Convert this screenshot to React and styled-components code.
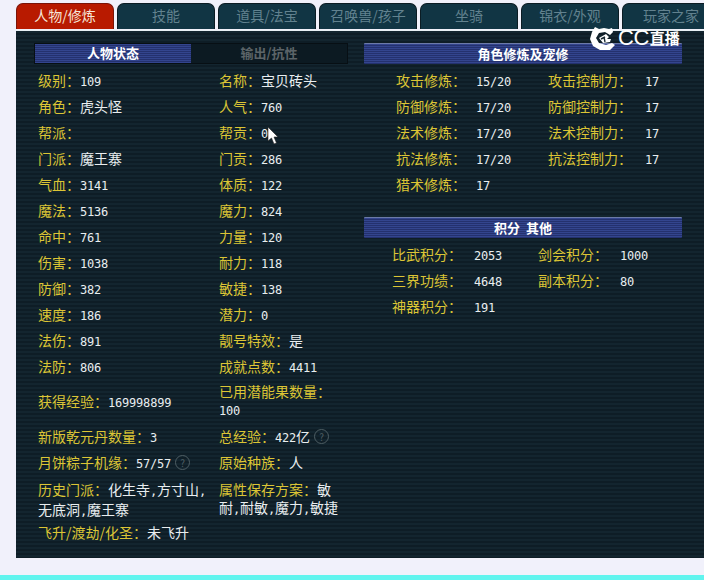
import React from "react"
import styled, { createGlobalStyle } from "styled-components"

const tabs = ["人物/修炼", "技能", "道具/法宝", "召唤兽/孩子", "坐骑", "锦衣/外观", "玩家之家"]

const leftRows = [
  [["级别", "109"], ["名称", "宝贝砖头"]],
  [["角色", "虎头怪"], ["人气", "760"]],
  [["帮派", ""], ["帮贡", "0"]],
  [["门派", "魔王寨"], ["门贡", "286"]],
  [["气血", "3141"], ["体质", "122"]],
  [["魔法", "5136"], ["魔力", "824"]],
  [["命中", "761"], ["力量", "120"]],
  [["伤害", "1038"], ["耐力", "118"]],
  [["防御", "382"], ["敏捷", "138"]],
  [["速度", "186"], ["潜力", "0"]],
  [["法伤", "891"], ["靓号特效", "是"]],
  [["法防", "806"], ["成就点数", "4411"]],
]

const practice = [
  ["攻击修炼", "15/20", "攻击控制力", "17"],
  ["防御修炼", "17/20", "防御控制力", "17"],
  ["法术修炼", "17/20", "法术控制力", "17"],
  ["抗法修炼", "17/20", "抗法控制力", "17"],
  ["猎术修炼", "17"],
]

const points = [
  ["比武积分", "2053", "剑会积分", "1000"],
  ["三界功绩", "4648", "副本积分", "80"],
  ["神器积分", "191"],
]

// digits are a small pixel-like face, chinese runs are a size bigger
function Value({ children }) {
  return String(children)
    .split(/([\u4e00-\u9fff]+)/)
    .filter(Boolean)
    .map((run, i) =>
      /[\u4e00-\u9fff]/.test(run) ? <Hanzi key={i}>{run}</Hanzi> : <Digits key={i}>{run}</Digits>
    )
}

function Stat({ label, value, help }) {
  return (
    <StatText>
      <Label>{label}：</Label>
      <Value>{value}</Value>
      {help && <HelpIcon>?</HelpIcon>}
    </StatText>
  )
}

function Pairs({ rows, widths }) {
  return rows.map((r) => (
    <PairRow key={r[0]} $widths={widths}>
      <Label>{r[0]}：</Label>
      <Digits>{r[1]}</Digits>
      {r[2] && <Label>{r[2]}：</Label>}
      {r[3] && <Digits>{r[3]}</Digits>}
    </PairRow>
  ))
}

export default function App() {
  return (
    <Page>
      <GlobalStyle />
      <TabBar>
        {tabs.map((t, i) => (
          <Tab key={t} $active={i === 0}>{t}</Tab>
        ))}
      </TabBar>
      <Panel>
        <Logo>
          <svg width="26" height="25" viewBox="0 0 26 25">
            <path d="M5 2l4 2 5-1 5 1 3-1 1 4-3 3-5-3-6 1-3 5 3 5 7 2 6-2 3 2-5 5H10l-7-4-3-7 2-7z" fill="#fff" />
            <path d="M9 13l7-4 3 3-2 2 4 0-1 3-7 1z" fill="#fff" />
            <path d="M11 14l4-2M14 12l1 5" stroke="#1a2a33" strokeWidth="1.4" />
          </svg>
          <LogoLatin>CC</LogoLatin>
          <LogoHanzi>直播</LogoHanzi>
        </Logo>
        <Pointer width="13" height="19" viewBox="0 0 13 19">
          <path d="M1 1v14l3.5-3 2.5 6 2.5-1-2.5-6H11z" fill="#fff" stroke="#222" strokeWidth="0.6" />
        </Pointer>
        <LeftColumn>
          <SplitHeader>
            <HeaderActive>人物状态</HeaderActive>
            <HeaderIdle>输出/抗性</HeaderIdle>
          </SplitHeader>
          <StatList>
            {leftRows.map((row, i) => (
              <StatRow key={i}>
                <Stat label={row[0][0]} value={row[0][1]} />
                <Stat label={row[1][0]} value={row[1][1]} />
              </StatRow>
            ))}
            <TallRow>
              <Stat label="获得经验" value="169998899" />
              <Wrapped>
                <Label>已用潜能果数量：</Label>
                <br />
                <Value>100</Value>
              </Wrapped>
            </TallRow>
            <StatRow>
              <Stat label="新版乾元丹数量" value="3" />
              <Stat label="总经验" value="422亿" help />
            </StatRow>
            <StatRow>
              <Stat label="月饼粽子机缘" value="57/57" help />
              <Stat label="原始种族" value="人" />
            </StatRow>
            <WrapRow>
              <Wrapped>
                <Label>历史门派：</Label>
                <Value>化生寺,方寸山,无底洞,魔王寨</Value>
              </Wrapped>
              <Wrapped>
                <Label>属性保存方案：</Label>
                <Value>敏耐,耐敏,魔力,敏捷</Value>
              </Wrapped>
            </WrapRow>
            <StatRow>
              <Stat label="飞升/渡劫/化圣" value="未飞升" />
            </StatRow>
          </StatList>
        </LeftColumn>
        <RightColumn>
          <SectionHeader>角色修炼及宠修</SectionHeader>
          <PairList $left={32}>
            <Pairs rows={practice} widths="80px 72px 97px auto" />
          </PairList>
          <SectionHeader>积分&nbsp;&nbsp;其他</SectionHeader>
          <PairList $left={28}>
            <Pairs rows={points} widths="82px 64px 82px auto" />
          </PairList>
        </RightColumn>
      </Panel>
      <BottomBand />
    </Page>
  )
}

const GlobalStyle = createGlobalStyle`
  html, body {
    margin: 0;
    padding: 0;
    background: #f1f1fb;
  }
`

const Page = styled.div`
  width: 704px;
  height: 580px;
  overflow: hidden;
  display: flex;
  flex-direction: column;
  font-family: "Noto Sans CJK SC", "Liberation Sans", sans-serif;
  font-size: 14px;
`

const TabBar = styled.div`
  display: flex;
  gap: 3px;
  padding: 3px 0 0 16px;
  height: 26px;
  flex: none;
`

const Tab = styled.div`
  width: 98px;
  flex: none;
  height: 26px;
  box-sizing: border-box;
  padding-bottom: 3px;
  display: flex;
  align-items: center;
  justify-content: center;
  border-radius: 7px 7px 0 0;
  border: 1px solid ${(p) => (p.$active ? "#7a1408" : "#0b1c24")};
  border-bottom: 0;
  background: ${(p) => (p.$active ? "#b81a00" : "#113544")};
  color: ${(p) => (p.$active ? "#f6e6d8" : "#62828f")};
  font-size: 14px;
`

const Panel = styled.div`
  position: relative;
  margin: 1px 0 0 16px;
  width: 688px;
  height: 528px;
  flex: none;
  box-sizing: border-box;
  padding: 12px 22px 0 18px;
  display: flex;
  gap: 16px;
  border-top: 1px solid #e8f0f4;
  background: repeating-linear-gradient(to bottom, #13252f 0, #13252f 2px, #0e1d26 2px, #0e1d26 4px);
`

const Logo = styled.div`
  position: absolute;
  top: -6px;
  left: 574px;
  display: flex;
  align-items: center;
  height: 25px;
  color: #fff;
`

const LogoLatin = styled.span`
  margin-left: 2px;
  font-family: "Liberation Sans", sans-serif;
  font-size: 22px;
  letter-spacing: -0.5px;
`

const LogoHanzi = styled.span`
  margin-left: 1px;
  font-size: 15px;
  font-weight: 700;
`

const Pointer = styled.svg`
  position: absolute;
  left: 251px;
  top: 95px;
`

const LeftColumn = styled.div`
  width: 314px;
  flex: none;
`

const RightColumn = styled.div`
  width: 318px;
  flex: none;
`

const SplitHeader = styled.div`
  display: flex;
  height: 21px;
  background: #0c1a22;
  border: 1px solid #070f14;
  box-sizing: border-box;
`

const HeaderActive = styled.div`
  width: 156px;
  box-sizing: border-box;
  padding-bottom: 2px;
  display: flex;
  align-items: center;
  justify-content: center;
  color: #fff;
  font-size: 13px;
  font-weight: 700;
  background: repeating-linear-gradient(to bottom, #33458e 0, #33458e 1px, #24316e 1px, #24316e 2px);
`

const HeaderIdle = styled.div`
  flex: 1;
  padding-bottom: 2px;
  display: flex;
  align-items: center;
  justify-content: center;
  color: #5c6468;
  font-size: 13px;
  font-weight: 700;
`

const SectionHeader = styled(HeaderActive)`
  width: 318px;
  height: 21px;
  border-radius: 1px;
  border-top: 1px solid #6c7aa8;
`

const StatList = styled.div`
  display: flex;
  flex-direction: column;
  padding: 3px 0 0 4px;
`

const StatRow = styled.div`
  display: grid;
  grid-template-columns: 181px 130px;
  height: 26px;
  align-items: center;
`

const TallRow = styled(StatRow)`
  height: 44px;
`

const WrapRow = styled(StatRow)`
  height: 44px;
  align-items: start;
  padding-top: 5px;
  box-sizing: border-box;
`

const StatText = styled.div`
  display: flex;
  align-items: baseline;
  white-space: nowrap;
`

const Wrapped = styled.div`
  line-height: 18px;
  width: 124px;
  word-break: break-all;

  &:first-child {
    width: 170px;
  }
`

const Label = styled.span`
  color: #dcc535;
  font-size: 14px;
`

const Hanzi = styled.span`
  color: #e9eef0;
  font-size: 14px;
`

const Digits = styled.span`
  color: #e9eef0;
  font-size: 12px;
  font-family: "DejaVu Sans Mono", monospace;
  letter-spacing: -0.2px;
`

const HelpIcon = styled.span`
  width: 15px;
  height: 15px;
  margin-left: 4px;
  align-self: center;
  border: 1px solid #4e5e64;
  border-radius: 50%;
  box-sizing: border-box;
  color: #4e5e64;
  font-size: 10px;
  line-height: 13px;
  text-align: center;
`

const PairList = styled.div`
  display: flex;
  flex-direction: column;
  padding: 3px 0 20px ${(p) => p.$left}px;
`

const PairRow = styled.div`
  display: grid;
  grid-template-columns: ${(p) => p.$widths};
  height: 26px;
  line-height: 26px;
  align-items: baseline;
  white-space: nowrap;
`

const BottomBand = styled.div`
  margin-top: 17px;
  height: 6px;
  background: #60f4ee;
  flex: none;
`
